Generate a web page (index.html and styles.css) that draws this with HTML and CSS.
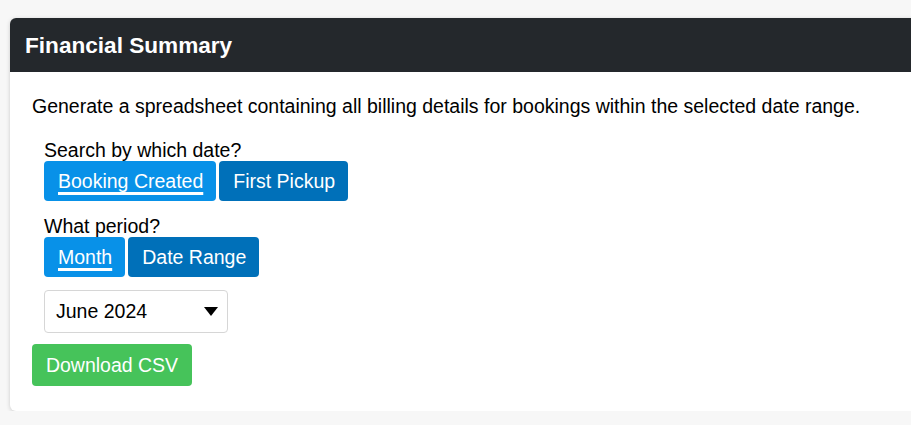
FILE: index.html
```html
<!DOCTYPE html>
<html>
<head>
<meta charset="utf-8">
<link rel="stylesheet" href="styles.css">
</head>
<body>
<div class="card">
  <div class="card-header">Financial Summary</div>
  <div class="card-body">
    <p class="intro">Generate a spreadsheet containing all billing details for bookings within the selected date range.</p>
    <div class="group">
      <div class="label">Search by which date?</div>
      <div class="btns">
        <button class="btn active"><span>Booking Created</span></button>
        <button class="btn">First Pickup</button>
      </div>
    </div>
    <div class="group group-last">
      <div class="label">What period?</div>
      <div class="btns">
        <button class="btn active"><span>Month</span></button>
        <button class="btn">Date Range</button>
      </div>
    </div>
    <div class="group select-group">
      <div class="select">
        <span>June 2024</span>
        <svg class="caret" width="14" height="9" viewBox="0 0 14 9"><path d="M0 0H14L7 9Z" fill="#000"/></svg>
      </div>
    </div>
    <button class="download">Download CSV</button>
  </div>
</div>
</body>
</html>
```
FILE: styles.css
```css
html, body {
  margin: 0;
  padding: 0;
  background: #f7f7f7;
  font-family: "Liberation Sans", Arial, sans-serif;
  color: #000;
}
body {
  padding: 18px 0 0 10px;
  overflow: hidden;
}
.card {
  width: 960px;
  background: #fff;
  border-radius: 6px;
  box-shadow: 0 1px 4px rgba(0,0,0,0.18);
  overflow: hidden;
}
.card-header {
  background: #24282c;
  color: #fff;
  font-weight: bold;
  font-size: 22.6px;
  height: 54px;
  line-height: 56px;
  padding-left: 15px;
}
.card-body {
  padding: 22px 22px 25px 22px;
}
.intro {
  margin: 0 0 22px 0;
  font-size: 19.5px;
  line-height: 24px;
}
.group {
  padding-left: 12px;
  margin-bottom: 15px;
}
.group-last {
  margin-bottom: 13px;
}
.select-group {
  margin-bottom: 11px;
}
.label {
  font-size: 19.5px;
  line-height: 21px;
}
.btns {
  display: flex;
  gap: 3px;
}
.btn {
  font-family: inherit;
  font-size: 19.5px;
  height: 40px;
  padding: 0 13px 0 14px;
  border: none;
  border-radius: 4px;
  background: #0070b9;
  color: #fff;
}
.btn.active {
  background: #0891e8;
}
.btn.active span {
  text-decoration: underline;
  text-decoration-thickness: 3px;
  text-underline-offset: 4px;
  text-decoration-skip-ink: none;
}
.select {
  width: 184px;
  height: 43px;
  box-sizing: border-box;
  border: 1px solid #d6d6d6;
  border-radius: 4px;
  display: flex;
  align-items: center;
  justify-content: space-between;
  padding: 0 9px 0 11px;
  font-size: 19.5px;
}
.caret {
  display: block;
}
.download {
  font-family: inherit;
  font-size: 19.5px;
  height: 42px;
  width: 160px;
  border: none;
  border-radius: 4px;
  background: #46c35a;
  color: #fff;
  padding: 0;
}
```
